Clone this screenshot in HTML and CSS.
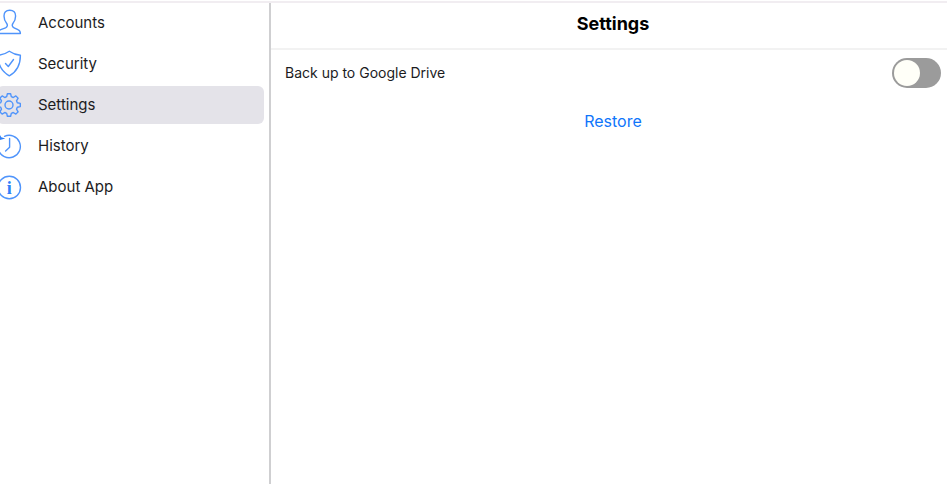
FILE: index.html
```
<!DOCTYPE html>
<html lang="en">
<head>
  <meta charset="UTF-8" />
  <title>Settings</title>
  <meta name="viewport" content="width=device-width, initial-scale=1.0" />
  <link rel="stylesheet" href="styles.css">
</head>
<body>
  <div class="app">
    <nav class="sidebar">
      <ul class="menu">
        <li>
          <a class="menu-item" href="#accounts">
            <svg class="icon" viewBox="0 0 24 24">
              <path d="M12.800 -.8C9 -.8 7 1.600 7 5C7 8.500 8.200 10.700 9.700 12.500C10.800 14 10.500 16 8.500 16.900L3.800 18.700C1.600 19.600 1 20.500 1 22.500H23.400C23.400 20.500 23 19.600 20.900 18.700L17.100 16.900C15.100 16 14.800 14 15.900 12.500C17.400 10.700 18.600 8.500 18.600 5C18.600 1.600 16.600 -.8 12.800 -.8Z" />
            </svg>
            Accounts
          </a>
        </li>
        <li>
          <a class="menu-item" href="#security">
            <svg class="icon" viewBox="0 0 24 24">
              <path d="M12.300 -.7C9 1.600 5.500 3 1 3.300C1 12 4.300 19.500 12.300 23.800C20.300 19.500 23.400 12 23.400 3.300C19 3 15.600 1.600 12.300 -.7Z" />
              <path d="M8.500 11.500L11.300 14.500L16.500 7.500" />
            </svg>
            Security
          </a>
        </li>
        <li>
          <a class="menu-item active" href="#settings">
            <svg class="icon" viewBox="0 0 24 24">
              <path d="M9.700 3.700L10.400 .7H13.600L14.300 3.700L16.240 4.500L18.860 2.880L21.120 5.140L19.500 7.760L20.300 9.700L23.300 10.400V13.600L20.300 14.300L19.500 16.240L21.120 18.860L18.860 21.120L16.240 19.500L14.300 20.300L13.600 23.300H10.400L9.700 20.300L7.760 19.500L5.140 21.120L2.880 18.860L4.500 16.240L3.700 14.300L.7 13.600V10.400L3.700 9.700L4.500 7.760L2.880 5.140L5.140 2.880L7.760 4.500Z" />
              <circle cx="12" cy="12" r="4" />
            </svg>
            Settings
          </a>
        </li>
        <li>
          <a class="menu-item" href="#history">
            <svg class="icon" viewBox="0 0 24 24">
              <path d="M7.500 2.300A11.200 11.200 0 1 1 1.500 16" />
              <path class="icon-fill" d="M2.500 0L4.300 3.200L8.300 4.600L2.400 6.200Z" />
              <path d="M12.600 4.500V13.200L8.600 17" />
            </svg>
            History
          </a>
        </li>
        <li>
          <a class="menu-item" href="#about">
            <svg class="icon" viewBox="0 0 24 24">
              <circle cx="12.300" cy="12.500" r="11.200" />
              <text class="icon-letter" x="12.300" y="18.500">i</text>
            </svg>
            About App
          </a>
        </li>
      </ul>
    </nav>

    <main class="content">
      <header class="content-header">
        <h1>Settings</h1>
      </header>
      <div class="setting-row">
        <label for="drive-backup">Back up to Google Drive</label>
        <input type="checkbox" id="drive-backup" class="switch" role="switch" />
      </div>
      <div class="actions">
        <button type="button" class="link-button">Restore</button>
      </div>
    </main>
  </div>
</body>
</html>
```

FILE: styles.css
```
* {
  box-sizing: border-box;
}
body {
  margin: 0;
  padding-top: 1px;
  background: #fff;
  color: #1c1c1e;
  font-family: Inter, "Liberation Sans", sans-serif;
}
.app {
  display: flex;
  min-height: calc(100vh - 1px);
  border-top: 2px solid #f1edf1;
}
.sidebar {
  flex: 0 0 271px;
  padding: 1px 5px 0 0;
  border-right: 2px solid #cfcfd1;
  overflow: hidden;
}
.menu {
  display: flex;
  flex-direction: column;
  gap: 3px;
  margin: 0 0 0 -3px;
  padding: 0;
  list-style: none;
}
.menu-item {
  display: flex;
  align-items: center;
  gap: 17px;
  height: 38px;
  border-radius: 6px;
  color: inherit;
  font-size: 15px;
  line-height: 20px;
  text-decoration: none;
}
.menu-item.active {
  background: #e4e3e9;
}
.icon {
  width: 24px;
  height: 24px;
  overflow: visible;
  fill: none;
  stroke: #4f94fb;
  stroke-width: 1.400;
  stroke-linejoin: round;
  stroke-linecap: round;
}
.icon-fill {
  fill: #2f80f8;
  stroke: none;
}
.icon-letter {
  fill: #2f80f8;
  stroke: none;
  font-family: "Liberation Serif", serif;
  font-size: 18px;
  font-weight: bold;
  text-anchor: middle;
}
.content {
  flex: 1;
}
.content-header {
  padding: 9px 6px 12px 14px;
  border-bottom: 2px solid #f2f2f2;
}
.content-header h1 {
  margin: 0;
  color: #000;
  font-size: 18px;
  font-weight: 700;
  line-height: 24px;
  text-align: center;
}
.setting-row {
  display: flex;
  align-items: center;
  justify-content: space-between;
  padding: 8px 6px 8px 14px;
  font-size: 14px;
  line-height: 20px;
}
.switch {
  appearance: none;
  display: flex;
  width: 49px;
  height: 30px;
  margin: 0;
  padding: 2px;
  border-radius: 15px;
  background: #9b9b9b;
  cursor: pointer;
}
.switch::before {
  content: "";
  width: 26px;
  height: 26px;
  border-radius: 50%;
  background: #fffff8;
}
.switch:checked {
  justify-content: flex-end;
  background: #1677f7;
}
.actions {
  display: flex;
  justify-content: center;
  padding: 11px 6px 12px 14px;
}
.link-button {
  padding: 4px 8px;
  border: none;
  background: none;
  color: #0f75fb;
  font-family: inherit;
  font-size: 16px;
  line-height: 20px;
  cursor: pointer;
}
```
